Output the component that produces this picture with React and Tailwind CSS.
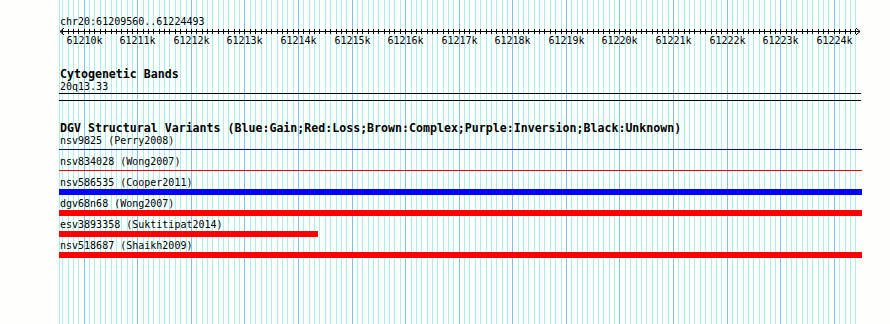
import React from "react";

const START = 61209560;
const END = 61224493;
const PX = 800 / (END - START);
const toX = (bp) => Math.floor(1.7 + (bp - START) * PX) + 0.5;

const ticks = [];
for (let bp = 61209600; bp <= 61224400; bp += 100) ticks.push(bp);

const variants = [
    { name: "nsv9825 (Perry2008)", bar: "mt-[2px] h-px w-full bg-[#0000cc]" },
    { name: "nsv834028 (Wong2007)", bar: "mt-[2px] h-px w-full bg-[#ee0000]" },
    { name: "nsv586535 (Cooper2011)", bar: "h-[6px] w-full bg-[#0000ff]" },
    { name: "dgv68n68 (Wong2007)", bar: "h-[6px] w-full bg-[#ff0000]" },
    { name: "esv3893358 (Suktitipat2014)", bar: "h-[6px] w-[259px] bg-[#ff0000]" },
    { name: "nsv518687 (Shaikh2009)", bar: "h-[6px] w-full bg-[#ff0000]" },
];

const Grid = () => (
    <svg
        className="absolute left-[59px] top-0"
        width="803"
        height="324"
        shapeRendering="crispEdges"
    >
        <line x1="0.5" y1="0" x2="0.5" y2="324" stroke="#aaeeee" />
        {ticks.map((bp) => (
            <line
                key={bp}
                x1={toX(bp)}
                y1="0"
                x2={toX(bp)}
                y2="324"
                stroke={bp % 1000 === 0 ? "#80c0ee" : "#aaeeee"}
            />
        ))}
    </svg>
);

const Ruler = () => (
    <svg className="block" width="803" height="20" shapeRendering="crispEdges">
        <rect x="1" y="3" width="800" height="1" fill="#000" />
        <polyline points="5,0 1,3.5 5,7" fill="none" stroke="#000" shapeRendering="auto" />
        <polyline points="797,0 801,3.5 797,7" fill="none" stroke="#000" shapeRendering="auto" />
        {ticks.map((bp) => (
            <line key={bp} x1={toX(bp)} y1="1" x2={toX(bp)} y2="6" stroke="#000" />
        ))}
        {ticks
            .filter((bp) => bp % 1000 === 0)
            .map((bp) => (
                <text
                    key={bp}
                    x={toX(bp)}
                    y="15.5"
                    textAnchor="middle"
                    fontSize="10"
                    fontFamily="DejaVu Sans Mono, monospace"
                    fill="#000"
                >
                    {bp / 1000}k
                </text>
            ))}
    </svg>
);

const App = () => {
    return (
        <div className="relative w-[890px] h-[324px] overflow-hidden bg-[#fdfffd] text-black font-['DejaVu_Sans_Mono',monospace]">
            <Grid />

            <div className="relative ml-[59px] w-[803px] pt-[16px]">
                {/* Position header */}
                <div className="h-[12px] pl-px text-[10px] leading-[12px]">chr20:61209560..61224493</div>
                <Ruler />

                {/* Cytogenetic bands */}
                <div className="mt-[20px] h-[12px] pl-px text-[11.6px] font-bold leading-[12px]">Cytogenetic Bands</div>
                <div className="mt-[0.5px] h-[12px] pl-px text-[10px] leading-[12px]">20q13.33</div>
                <div className="mt-[0.5px] h-px w-[802px] bg-black" />
                <div className="mt-[6px] h-px w-[802px] bg-black" />

                {/* DGV track */}
                <div className="mt-[21px] h-[12px] pl-px text-[11.6px] font-bold leading-[12px] whitespace-nowrap">
                    DGV Structural Variants (Blue:Gain;Red:Loss;Brown:Complex;Purple:Inversion;Black:Unknown)
                </div>
                {variants.map((v) => (
                    <div key={v.name} className="h-[21px]">
                        <div className="h-[13px] pl-px text-[10px] leading-[13px] whitespace-nowrap">{v.name}</div>
                        <div className="h-[6px]">
                            <div className={v.bar} />
                        </div>
                    </div>
                ))}
            </div>
        </div>
    );
};

export default App;
